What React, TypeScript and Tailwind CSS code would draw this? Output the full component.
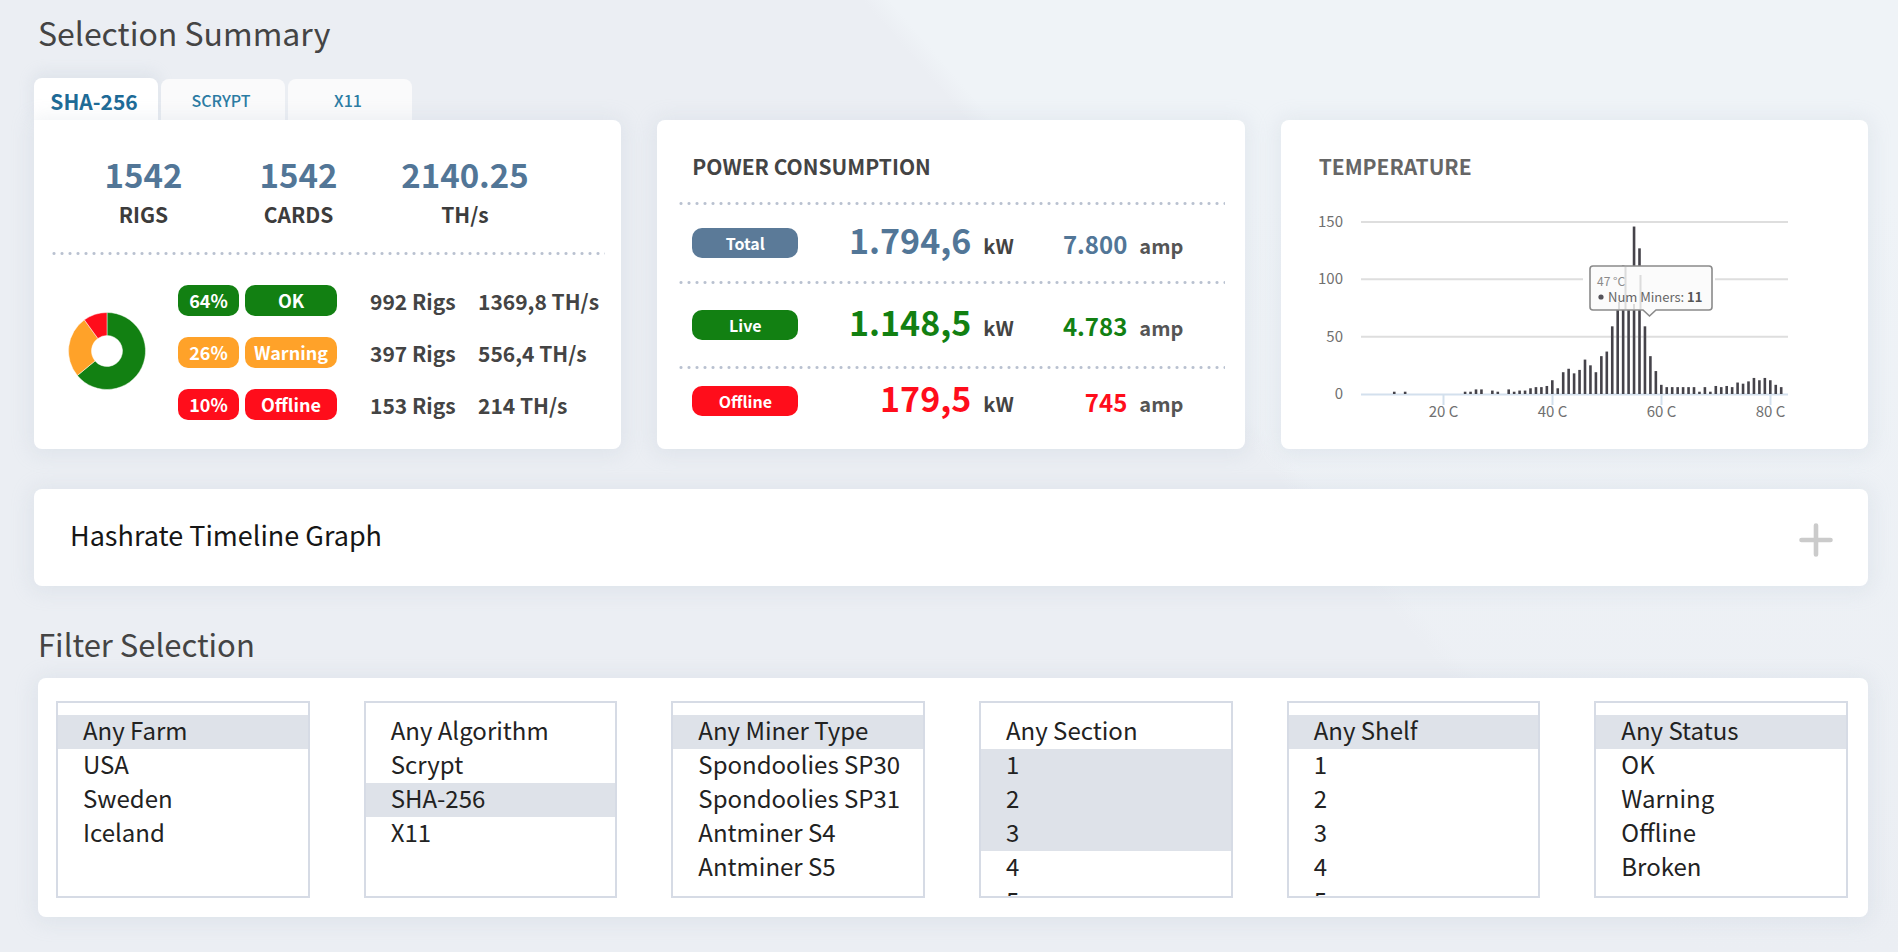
import { useState } from "react";

const card = "rounded-lg bg-white shadow-[0_2px_20px_4px_rgba(175,188,205,0.2)]";
const dots =
  "h-[3px] bg-[radial-gradient(circle,#b9c1d0_1px,transparent_2px)] bg-[length:8px_3px] bg-repeat-x";

const tabs = ["SHA-256", "SCRYPT", "X11"];

const totals = [
  { value: "1542", label: "RIGS" },
  { value: "1542", label: "CARDS" },
  { value: "2140.25", label: "TH/s" },
];

const statuses = [
  { percent: "64%", name: "OK", rigs: "992 Rigs", rate: "1369,8 TH/s", bg: "bg-[#128012]" },
  { percent: "26%", name: "Warning", rigs: "397 Rigs", rate: "556,4 TH/s", bg: "bg-[#ffa229]" },
  { percent: "10%", name: "Offline", rigs: "153 Rigs", rate: "214 TH/s", bg: "bg-[#ff0d1b]" },
];

const power = [
  { name: "Total", kw: "1.794,6", amp: "7.800", bg: "bg-[#5b7a98]", fg: "text-[#527697]", row: "h-[76px]" },
  { name: "Live", kw: "1.148,5", amp: "4.783", bg: "bg-[#128012]", fg: "text-[#128012]", row: "h-[82px]" },
  { name: "Offline", kw: "179,5", amp: "745", bg: "bg-[#ff0d1b]", fg: "text-[#ff0d1b]", row: "h-16" },
];

const miners: Record<number, number> = {
  11: 2, 13: 2, 24: 2, 25: 2, 26: 4, 27: 4, 29: 3, 30: 2, 32: 4, 33: 2, 34: 3, 35: 3, 36: 5, 37: 6,
  38: 6, 39: 7, 40: 12, 41: 5, 42: 19, 43: 22, 44: 18, 45: 21, 46: 30, 47: 25, 48: 19, 49: 33, 50: 37,
  51: 59, 52: 78, 53: 112, 54: 78, 55: 146, 56: 127, 57: 59, 58: 33, 59: 20, 60: 8, 61: 6, 62: 6,
  63: 6, 64: 6, 65: 6, 66: 6, 67: 2, 68: 6, 69: 2, 70: 7, 71: 6, 72: 7, 73: 6, 74: 10, 75: 9, 76: 11,
  77: 14, 78: 12, 79: 14, 80: 12, 81: 8, 82: 6,
};

const filters = [
  { label: "Farm", options: ["Any Farm", "USA", "Sweden", "Iceland"], selected: ["Any Farm"] },
  { label: "Algorithm", options: ["Any Algorithm", "Scrypt", "SHA-256", "X11"], selected: ["SHA-256"] },
  {
    label: "Miner type",
    options: ["Any Miner Type", "Spondoolies SP30", "Spondoolies SP31", "Antminer S4", "Antminer S5"],
    selected: ["Any Miner Type"],
  },
  { label: "Section", options: ["Any Section", "1", "2", "3", "4", "5"], selected: ["1", "2", "3"] },
  { label: "Shelf", options: ["Any Shelf", "1", "2", "3", "4", "5"], selected: ["Any Shelf"] },
  { label: "Status", options: ["Any Status", "OK", "Warning", "Offline", "Broken"], selected: ["Any Status"] },
];

function Donut() {
  const slices = [
    { from: 0, to: 0.64, fill: "#128012" },
    { from: 0.64, to: 0.9, fill: "#ffa229" },
    { from: 0.9, to: 1, fill: "#ff0d1b" },
  ];
  const point = (r: number, t: number) =>
    `${40 + r * Math.sin(2 * Math.PI * t)} ${40 - r * Math.cos(2 * Math.PI * t)}`;
  return (
    <svg viewBox="0 0 80 80" className="size-20 shrink-0" role="img" aria-label="Rig status shares">
      {slices.map((s) => {
        const large = s.to - s.from > 0.5 ? 1 : 0;
        return (
          <path
            key={s.fill}
            fill={s.fill}
            stroke="#ffffff"
            strokeOpacity="0.6"
            strokeWidth="0.8"
            d={`M${point(38.5, s.from)} A38.5 38.5 0 ${large} 1 ${point(38.5, s.to)} L${point(15.5, s.to)} A15.5 15.5 0 ${large} 0 ${point(15.5, s.from)} Z`}
          />
        );
      })}
    </svg>
  );
}

function TemperatureChart() {
  const x = (t: number) => 128.5 + (t - 20) * 5.45;
  const y = (v: number) => 184 - v * 1.147;
  return (
    <svg viewBox="0 0 480 215" className="w-[480px] max-w-full" role="img" aria-label="Miners by temperature">
      {[150, 100, 50].map((v) => (
        <line key={v} x1="46" x2="473" y1={y(v)} y2={y(v)} stroke="#dedede" strokeWidth="2" />
      ))}
      <line x1="46" x2="473" y1="184.5" y2="184.5" stroke="#d3e0ed" strokeWidth="2" />
      {[150, 100, 50, 0].map((v) => (
        <text key={v} x="28" y={y(v) + 5} textAnchor="end" fontSize="15" fill="#707070">
          {v}
        </text>
      ))}
      {[20, 40, 60, 80].map((t) => (
        <g key={t}>
          <line x1={x(t)} x2={x(t)} y1="184" y2="195" stroke="#d3e0ed" strokeWidth="2" />
          <text x={x(t)} y="207" textAnchor="middle" fontSize="15" fill="#707070">
            {t} C
          </text>
        </g>
      ))}
      {Object.entries(miners).map(([t, v]) => (
        <rect
          key={t}
          x={x(Number(t)) - 1.5}
          y={y(v)}
          width="2.6"
          height={184 - y(v)}
          fill="#45434a"
        />
      ))}
      <rect x="268" y="64" width="132" height="12" fill="#ffffff" />
      <path
        d="M278 56 H394 Q397 56 397 59 V97 Q397 100 394 100 H341 L334.500 106 L328 100 H278 Q275 100 275 97 V59 Q275 56 278 56 Z"
        fill="#fbfbfb"
        stroke="#8a8a8a"
        strokeWidth="1.6"
      />
      <g fill="#dcdcdc">
        <rect x="303" y="92" width="2" height="7" />
        <rect x="309.5" y="57" width="2" height="42" />
        <rect x="318" y="94" width="2" height="5" />
        <rect x="324.5" y="65" width="2" height="34" />
      </g>
      <text x="282" y="76" fontSize="12" fill="#8a8a8a">
        47 °C
      </text>
      <circle cx="286" cy="87" r="2.6" fill="#55535a" />
      <text x="293" y="92" fontSize="13" fill="#666666">
        Num Miners: <tspan fontWeight="700" fill="#555555">11</tspan>
      </text>
    </svg>
  );
}

export default function App() {
  const [active, setActive] = useState("SHA-256");
  const [open, setOpen] = useState(false);

  return (
    <main className="min-h-screen bg-[linear-gradient(to_bottom,rgba(235,238,243,0)_20%,#ebeef3),linear-gradient(49deg,#ebeef3_62%,#eff3f7_63%)] pt-3 pr-[30px] pb-[35px] pl-[34px] font-['Noto_Sans_CJK_SC','Noto_Sans',sans-serif] text-[#444444]">
      <h1 className="pl-1 text-[32px] leading-10">Selection Summary</h1>

      <div className="mt-[26px] grid grid-cols-3 items-end gap-9">
        <section>
          <div role="tablist" className="flex items-end gap-[3px]">
            {tabs.map((tab) => (
              <button
                key={tab}
                role="tab"
                type="button"
                aria-selected={tab === active}
                onClick={() => setActive(tab)}
                className={
                  tab === active
                    ? "h-[42px] w-[124px] rounded-t-lg bg-white pt-[6px] pr-1 text-[21px] font-bold text-[#1d6a96] shadow-[0_-4px_14px_2px_rgba(175,188,205,0.2)]"
                    : "h-[41px] w-[124px] rounded-t-lg bg-[#fafafb] pr-1 text-base font-medium text-[#2b7ba3]"
                }
              >
                {tab}
              </button>
            ))}
          </div>
          <div className={`${card} relative h-[329px] rounded-tl-none px-4 pt-[34px]`}>
            <dl className="grid grid-cols-[155px_155px_178px] pl-4">
              {totals.map((t) => (
                <div key={t.label} className="flex flex-col-reverse text-center">
                  <dt className="text-[21px] leading-10 font-bold text-[#3c3c3c]">{t.label}</dt>
                  <dd className="text-[33px] leading-10 font-bold text-[#527697]">{t.value}</dd>
                </div>
              ))}
            </dl>
            <div className={`${dots} mt-[18px]`} />
            <div className="mt-[30px] flex items-start gap-[31px] pl-[17px]">
              <div className="pt-[26px]">
                <Donut />
              </div>
              <ul className="flex flex-col gap-[21px]">
                {statuses.map((s) => (
                  <li key={s.name} className="flex h-[31px] items-center text-[21px] font-bold whitespace-nowrap">
                    <span className={`${s.bg} flex h-[31px] w-[61px] items-center justify-center rounded-[10px] text-[18px] text-white`}>
                      {s.percent}
                    </span>
                    <span className={`${s.bg} ml-[6px] flex h-[31px] w-[92px] items-center justify-center rounded-[10px] text-[18px] text-white`}>
                      {s.name}
                    </span>
                    <span className="ml-[33px] w-[108px] leading-7">{s.rigs}</span>
                    <span className="leading-7">{s.rate}</span>
                  </li>
                ))}
              </ul>
            </div>
          </div>
        </section>

        <section className={`${card} h-[329px] px-5 pt-[26px]`}>
          <h2 className="pl-[15px] text-[21px] leading-10 font-bold">POWER CONSUMPTION</h2>
          <div className="pt-4">
            {power.map((p) => (
              <div key={p.name}>
                <div className={dots} />
                <div className={`${p.row} flex items-center pl-[15px] font-bold`}>
                  <span className={`${p.bg} flex h-[30px] w-[106px] items-center justify-center rounded-[10px] text-[16px] text-white`}>
                    {p.name}
                  </span>
                  <div className="flex items-baseline leading-10">
                    <span className={`${p.fg} w-[173px] text-right text-[34px]`}>{p.kw}</span>
                    <span className="ml-3 w-8 text-[20px]">kW</span>
                    <span className={`${p.fg} w-[112px] text-right text-[24px]`}>{p.amp}</span>
                    <span className="ml-3 text-[20px] text-[#555555]">amp</span>
                  </div>
                </div>
              </div>
            ))}
          </div>
        </section>

        <section className={`${card} h-[329px] px-[34px] pt-[26px]`}>
          <h2 className="pl-1 text-[21px] leading-10 font-bold text-[#666666]">TEMPERATURE</h2>
          <div className="mt-6">
            <TemperatureChart />
          </div>
        </section>
      </div>

      <section className={`${card} mt-10`}>
        <button
          type="button"
          aria-expanded={open}
          onClick={() => setOpen(!open)}
          className="flex h-[97px] w-full items-center justify-between pr-[35px] pl-9 text-[27px] text-[#161616]"
        >
          <span className="pb-1">Hashrate Timeline Graph</span>
          <svg viewBox="0 0 34 34" className="mt-1 size-[34px]" aria-hidden="true">
            <path d="M17 2.500 V31.500 M2.500 17 H31.500" stroke="#cbcbcb" strokeWidth="4.6" strokeLinecap="round" />
          </svg>
        </button>
      </section>

      <h2 className="mt-[38px] pl-1 text-[31px] leading-10">Filter Selection</h2>

      <section className={`${card} mt-[14px] ml-1 grid grid-cols-6 gap-[54px] pt-[23px] pr-5 pb-[19px] pl-[18px]`}>
        {filters.map((f) => (
          <select
            key={f.label}
            multiple
            aria-label={f.label}
            defaultValue={f.selected}
            className="h-[197px] w-full overflow-x-hidden overflow-y-auto border-2 border-[#d6dbe5] bg-white pt-3 text-[24px] text-[#222222] outline-none [scrollbar-width:none]"
          >
            {f.options.map((o) => (
              <option
                key={o}
                className="flex h-[34px] items-end p-0 pb-[2px] pl-[25px] text-[#222222] checked:bg-[linear-gradient(#dee2e9,#dee2e9)]"
              >
                {o}
              </option>
            ))}
          </select>
        ))}
      </section>
    </main>
  );
}
